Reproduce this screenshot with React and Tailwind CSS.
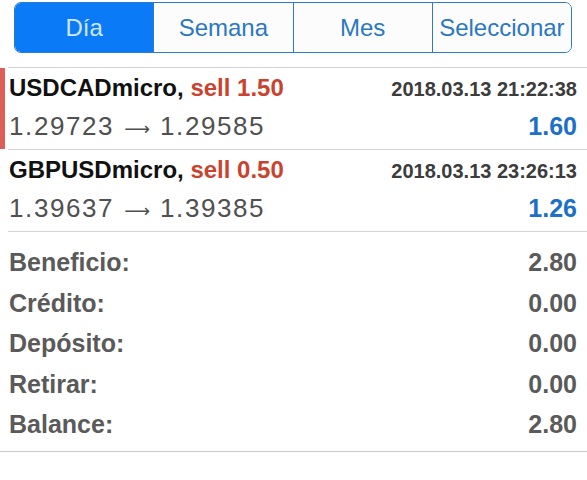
const tabs = ['Día', 'Semana', 'Mes', 'Seleccionar']

const deals = [
  {
    symbol: 'USDCADmicro,',
    side: 'sell 1.50',
    time: '2018.03.13 21:22:38',
    open: '1.29723',
    close: '1.29585',
    profit: '1.60',
    marked: true,
  },
  {
    symbol: 'GBPUSDmicro,',
    side: 'sell 0.50',
    time: '2018.03.13 23:26:13',
    open: '1.39637',
    close: '1.39385',
    profit: '1.26',
    marked: false,
  },
]

const totals = [
  ['Beneficio:', '2.80'],
  ['Crédito:', '0.00'],
  ['Depósito:', '0.00'],
  ['Retirar:', '0.00'],
  ['Balance:', '2.80'],
]

function DealRow({ deal }) {
  return (
    <div className="flex h-[82px] border-b border-[#d4d4d4] ml-[8px]">
      <div className={`w-[5px] -ml-[8px] mr-[4px] ${deal.marked ? 'bg-[#de5f55]' : 'bg-transparent'}`} />
      <div className="flex-1 pr-[10px] pt-[2px]">
        <div className="flex items-baseline justify-between h-[36px] leading-[36px]">
          <div className="text-[24px] font-bold">
            <span className="text-[#111111]">{deal.symbol}</span>{' '}
            <span className="text-[#c9432f]">{deal.side}</span>
          </div>
          <div className="text-[20px] font-bold text-[#3c3c3c]">{deal.time}</div>
        </div>
        <div className="flex items-baseline justify-between h-[36px] leading-[36px] mt-[2px]">
          <div className="text-[26px] text-[#505050]">
            <span className="tracking-[1.6px]">{deal.open}</span>
            <span className="font-['DejaVu_Sans',sans-serif] text-[18px] mx-[10px]">⟶</span>
            <span className="tracking-[1.6px]">{deal.close}</span>
          </div>
          <div className="text-[25px] font-bold text-[#1c70c8]">{deal.profit}</div>
        </div>
      </div>
    </div>
  )
}

export default function App() {
  return (
    <div className="w-[587px] h-[480px] bg-white overflow-hidden font-['Liberation_Sans',Arial,sans-serif]">
      <div className="pt-[2px] pl-[14px] pr-[15px]">
        <div className="flex h-[51px] border border-[#2b7bd0] rounded-[7px] overflow-hidden">
          {tabs.map((tab, i) => (
            <div
              key={tab}
              className={`flex-1 flex items-center justify-center text-[24px] ${
                i > 0 ? 'border-l border-[#2b7bd0]' : ''
              } ${i === 0 ? 'bg-[#0b7af6] text-[#cfe6ff]' : 'bg-[#fcfcfd] text-[#2a77c4]'}`}
            >
              {tab}
            </div>
          ))}
        </div>
      </div>

      <div className="mt-[14px] ml-[8px] border-t border-[#d4d4d4]" />
      {deals.map(deal => (
        <DealRow key={deal.symbol} deal={deal} />
      ))}

      <div className="pt-[10px] pb-[6px] pl-[9px] pr-[10px] border-b border-[#c8c8c8]">
        {totals.map(([label, value]) => (
          <div key={label} className="flex justify-between h-[40.5px] leading-[40px] text-[25px] font-bold text-[#5a5a5a]">
            <span>{label}</span>
            <span>{value}</span>
          </div>
        ))}
      </div>
    </div>
  )
}
